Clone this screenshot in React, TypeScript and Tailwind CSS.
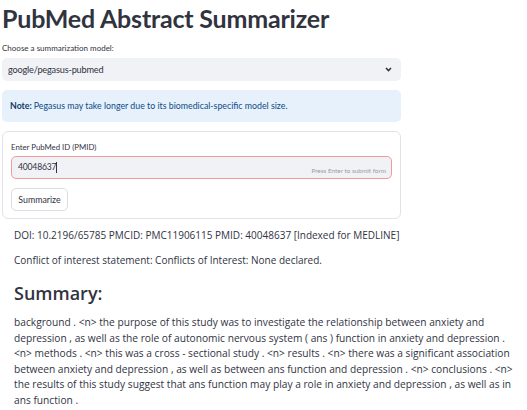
import React from "react";

const top = { fontFamily: '"Lato", "Liberation Sans", sans-serif' };
const body = { fontFamily: '"Open Sans", "Liberation Sans", sans-serif' };

const lines = [
  "background . <n> the purpose of this study was to investigate the relationship between anxiety and",
  "depression , as well as the role of autonomic nervous system ( ans ) function in anxiety and depression .",
  "<n> methods . <n> this was a cross - sectional study . <n> results . <n> there was a significant association",
  "between anxiety and depression , as well as between ans function and depression . <n> conclusions . <n>",
  "the results of this study suggest that ans function may play a role in anxiety and depression , as well as in",
  "ans function .",
];

export default function App() {
  return (
    <div className="w-[527px] h-[410px] overflow-hidden bg-white text-[#31333f]">
      <div className="ml-[2px] w-[399px]" style={top}>
        <h1 className="text-[25px] leading-[30px] font-bold pt-[3px] tracking-[-0.2px]">PubMed Abstract Summarizer</h1>
        <div className="text-[8px] leading-[12px] mt-[9px]">Choose a summarization model:</div>
        <div className="mt-[4px] h-[23px] rounded-[5px] bg-[#f0f2f6] flex items-center justify-between pl-[6px] pr-[9px]">
          <span className="text-[9.2px] tracking-[-0.2px]">google/pegasus-pubmed</span>
          <svg width="7" height="5" viewBox="0 0 7 5">
            <path d="M1 1 L3.5 3.6 L6 1" stroke="#31333f" strokeWidth="1.5" fill="none" />
          </svg>
        </div>
        <div className="mt-[9px] h-[32px] rounded-[5px] bg-[#e7f1fc] flex items-center pl-[8px] text-[8.8px] text-[#0d4a86]">
          <span className="font-bold text-[#123a66] mr-[2px]">Note:</span>
          <span>Pegasus may take longer due to its biomedical-specific model size.</span>
        </div>
        <div className="mt-[9px] h-[88px] rounded-[6px] border border-[#e2e3e8] pl-[8px] pr-[8px] pt-[10px]">
          <div className="text-[7.8px] leading-[11px]">Enter PubMed ID (PMID)</div>
          <div className="mt-[3px] h-[23px] rounded-[5px] bg-[#f0f2f6] border border-[#f29a9a] relative flex items-center pl-[6px]">
            <span className="text-[8.6px] tracking-[-0.2px]">40048637</span>
            <span className="w-px h-[11px] bg-[#31333f]"></span>
            <span className="absolute right-[5px] bottom-[2px] text-[6.4px] text-[#9a9ba3]">Press Enter to submit form</span>
          </div>
          <button className="mt-[9px] h-[23px] w-[57px] rounded-[5px] border border-[#dcdde2] bg-white text-[8.8px] flex items-center justify-center">Summarize</button>
        </div>
      </div>
      <div className="pl-[14px]" style={body}>
        <p className="mt-[8px] text-[10px] leading-[16px]">DOI: 10.2196/65785 PMCID: PMC11906115 PMID: 40048637 [Indexed for MEDLINE]</p>
        <p className="mt-[9px] text-[10px] leading-[16px]">Conflict of interest statement: Conflicts of Interest: None declared.</p>
        <h2 className="mt-[13px] text-[18px] leading-[24px] font-semibold">Summary:</h2>
        <div className="mt-[10px] text-[10.2px] leading-[15.5px]">
          {lines.map((l, i) => (
            <div key={i} className="whitespace-nowrap">{l}</div>
          ))}
        </div>
      </div>
    </div>
  );
}
